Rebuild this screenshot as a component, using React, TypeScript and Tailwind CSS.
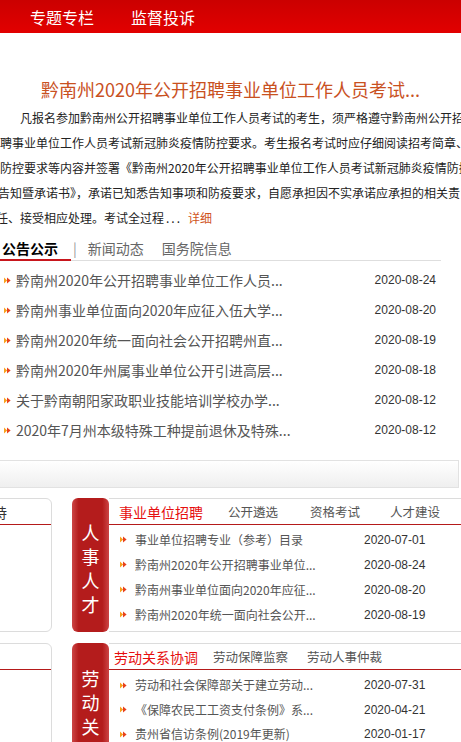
import React from "react";

const Bullet = () => (
  <svg width="7" height="7" viewBox="0 0 7 7" className="shrink-0">
    <polygon points="0,0.5 3.2,3.5 0,6.5" fill="#f9a11b" />
    <polygon points="3,0.5 6.6,3.5 3,6.5" fill="#e8401c" />
  </svg>
);

const mainList: [string, string][] = [
  ["黔南州2020年公开招聘事业单位工作人员...", "2020-08-24"],
  ["黔南州事业单位面向2020年应征入伍大学...", "2020-08-20"],
  ["黔南州2020年统一面向社会公开招聘州直...", "2020-08-19"],
  ["黔南州2020年州属事业单位公开引进高层...", "2020-08-18"],
  ["关于黔南朝阳家政职业技能培训学校办学...", "2020-08-12"],
  ["2020年7月州本级特殊工种提前退休及特殊...", "2020-08-12"],
];

const sec1: [string, string][] = [
  ["事业单位招聘专业（参考）目录", "2020-07-01"],
  ["黔南州2020年公开招聘事业单位...", "2020-08-24"],
  ["黔南州事业单位面向2020年应征...", "2020-08-20"],
  ["黔南州2020年统一面向社会公开...", "2020-08-19"],
];

const sec2: [string, string][] = [
  ["劳动和社会保障部关于建立劳动...", "2020-07-31"],
  ["《保障农民工工资支付条例》系...", "2020-04-21"],
  ["贵州省信访条例(2019年更新)", "2020-01-17"],
];

function Section({
  label,
  tabs,
  widths,
  tabPl,
  items,
  cardText,
  labelPt,
  listPt,
  itemH,
}: {
  label: string;
  tabs: string[];
  widths: string[];
  tabPl: string;
  items: [string, string][];
  cardText: string;
  labelPt: string;
  listPt: string;
  itemH: string;
}) {
  return (
    <div className="h-[134px] flex shrink-0">
      <div className="ml-[-128px] w-[180px] h-full border border-[#dcdcdc] rounded-[6px] shrink-0">
        <div className="h-[26px] border-b border-[#b51a1a] flex items-center justify-end pr-[44px] text-[14px] leading-[20px] text-[#333]">
          {cardText}
        </div>
      </div>
      <div
        className={`ml-[20px] w-[37px] h-full rounded-[6px] bg-[linear-gradient(to_right,#cc4545,#b41c1c_18%,#b41c1c_82%,#cc4545)] flex flex-col items-center text-white text-[18px] leading-[24px] shrink-0 ${labelPt}`}
      >
        {label.split("").map((c, i) => (
          <span key={i} className="h-[24px]">
            {c}
          </span>
        ))}
      </div>
      <div className="w-[400px] shrink-0 h-full border-y border-[#dcdcdc]">
        <div className={`h-[26px] border-b border-[#b51a1a] flex items-center ${tabPl}`}>
          {tabs.map((t, i) => (
            <span
              key={i}
              className={`${widths[i]} shrink-0 whitespace-nowrap ${
                i === 0
                  ? "text-[14px] text-[#e60f0f]"
                  : "text-[12.5px] text-[#555]"
              } leading-[20px]`}
            >
              {t}
            </span>
          ))}
        </div>
        <div className={`flex flex-col ${listPt}`}>
          {items.map(([t, d], i) => (
            <div key={i} className={`${itemH} flex items-center`}>
              <div className="pl-[11px] w-[26px] shrink-0 flex">
                <Bullet />
              </div>
              <span className="w-[229px] shrink-0 whitespace-nowrap text-[12px] leading-[18px] text-[#555]">
                {t}
              </span>
              <span className="whitespace-nowrap font-['Liberation_Sans',sans-serif] text-[12px] leading-[18px] text-[#333]">
                {d}
              </span>
            </div>
          ))}
        </div>
      </div>
    </div>
  );
}

export default function App() {
  return (
    <div className="w-[461px] h-[742px] overflow-hidden bg-white flex flex-col font-['Noto_Sans_CJK_SC','Liberation_Sans',sans-serif]">
      <div className="h-[33px] shrink-0 bg-[linear-gradient(#cb0000,#e20000)] flex items-center pl-[30px] gap-[37px] text-white text-[16px] leading-[20px]">
        <span>专题专栏</span>
        <span>监督投诉</span>
      </div>

      <div className="mt-[44px] h-[24px] shrink-0 leading-[24px] text-[18px] text-[#c9511f] text-center whitespace-nowrap">
        黔南州2020年公开招聘事业单位工作人员考试...
      </div>

      <div className="mt-[4px] shrink-0 text-[12px] leading-[25px] text-[#222]">
        <div className="whitespace-nowrap overflow-hidden pl-[20px]">
          凡报名参加黔南州公开招聘事业单位工作人员考试的考生，须严格遵守黔南州公开招
        </div>
        <div className="whitespace-nowrap overflow-hidden">
          聘事业单位工作人员考试新冠肺炎疫情防控要求。考生报名考试时应仔细阅读招考简章、疫情
        </div>
        <div className="whitespace-nowrap overflow-hidden">
          防控要求等内容并签署《黔南州2020年公开招聘事业单位工作人员考试新冠肺炎疫情防控
        </div>
        <div className="whitespace-nowrap overflow-hidden ml-[-2px]">
          告知暨承诺书》，承诺已知悉告知事项和防疫要求，自愿承担因不实承诺应承担的相关责
        </div>
        <div className="whitespace-nowrap overflow-hidden ml-[-4px] flex">
          <span>任、接受相应处理。考试全过程</span>
          <span className="ml-[2px] tracking-[2px]">...</span>
          <span className="ml-[6px] text-[#d0531c]">详细</span>
        </div>
      </div>

      <div className="mt-[6px] w-[441px] h-[25px] shrink-0 border-b border-[#dedede] flex items-stretch text-[14px] leading-[20px]">
        <div className="w-[71px] pl-[2px] flex items-center font-bold text-black border-b-2 border-[#c8161d] mb-[-1px]">
          公告公示
        </div>
        <div className="flex items-center text-[#999] ml-[2px]">|</div>
        <div className="flex items-center text-[#666] ml-[11px]">新闻动态</div>
        <div className="flex items-center text-[#666] ml-[18px]">国务院信息</div>
      </div>

      <div className="mt-[4px] w-[441px] shrink-0 flex flex-col">
        {mainList.map(([t, d], i) => (
          <div key={i} className="h-[30px] flex items-center">
            <div className="pl-[4px] w-[16px] shrink-0 flex">
              <Bullet />
            </div>
            <span className="flex-1 min-w-0 whitespace-nowrap text-[14px] leading-[20px] text-[#555]">
              {t}
            </span>
            <span className="shrink-0 whitespace-nowrap mr-[5px] font-['Liberation_Sans',sans-serif] text-[12px] leading-[18px] text-[#333]">
              {d}
            </span>
          </div>
        ))}
      </div>

      <div className="mt-[15px] ml-[-1px] w-[460px] h-[28px] shrink-0 border border-[#e2e2e2] bg-[linear-gradient(#ffffff,#efefef)]" />

      <div className="mt-[10px]">
        <Section
          label="人事人才"
          tabs={["事业单位招聘", "公开遴选", "资格考试", "人才建设"]}
          widths={["w-[109px]", "w-[82px]", "w-[80px]", "w-[80px]"]}
          tabPl="pl-[10px]"
          items={sec1}
          cardText="政策扶持"
          labelPt="pt-[22px]"
          listPt="pt-[2px]"
          itemH="h-[25px]"
        />
      </div>
      <div className="mt-[11px]">
        <Section
          label="劳动关系"
          tabs={["劳动关系协调", "劳动保障监察", "劳动人事仲裁"]}
          widths={["w-[99px]", "w-[94px]", "w-[90px]"]}
          tabPl="pl-[5px]"
          items={sec2}
          cardText=""
          labelPt="pt-[23px]"
          listPt="pt-[3px]"
          itemH="h-[24.5px]"
        />
      </div>
    </div>
  );
}
